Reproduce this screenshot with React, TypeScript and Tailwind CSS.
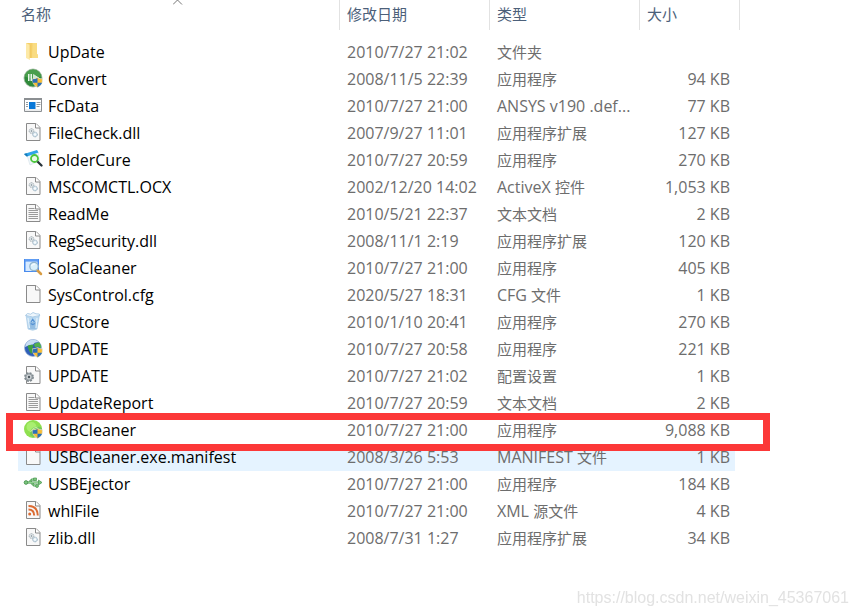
import type { ReactNode } from "react";

type IconName =
  | "folder"
  | "convert"
  | "window"
  | "dll"
  | "folderCure"
  | "text"
  | "sola"
  | "blank"
  | "bin"
  | "globe"
  | "config"
  | "usbCleaner"
  | "usb"
  | "feed";

interface FileRow {
  name: string;
  date: string;
  type: string;
  size: string;
  icon: IconName;
  hovered?: boolean;
  marked?: boolean;
}

const files: FileRow[] = [
  { name: "UpDate", date: "2010/7/27 21:02", type: "文件夹", size: "", icon: "folder" },
  { name: "Convert", date: "2008/11/5 22:39", type: "应用程序", size: "94 KB", icon: "convert" },
  { name: "FcData", date: "2010/7/27 21:00", type: "ANSYS v190 .def...", size: "77 KB", icon: "window" },
  { name: "FileCheck.dll", date: "2007/9/27 11:01", type: "应用程序扩展", size: "127 KB", icon: "dll" },
  { name: "FolderCure", date: "2010/7/27 20:59", type: "应用程序", size: "270 KB", icon: "folderCure" },
  { name: "MSCOMCTL.OCX", date: "2002/12/20 14:02", type: "ActiveX 控件", size: "1,053 KB", icon: "dll" },
  { name: "ReadMe", date: "2010/5/21 22:37", type: "文本文档", size: "2 KB", icon: "text" },
  { name: "RegSecurity.dll", date: "2008/11/1 2:19", type: "应用程序扩展", size: "120 KB", icon: "dll" },
  { name: "SolaCleaner", date: "2010/7/27 21:00", type: "应用程序", size: "405 KB", icon: "sola" },
  { name: "SysControl.cfg", date: "2020/5/27 18:31", type: "CFG 文件", size: "1 KB", icon: "blank" },
  { name: "UCStore", date: "2010/1/10 20:41", type: "应用程序", size: "270 KB", icon: "bin" },
  { name: "UPDATE", date: "2010/7/27 20:58", type: "应用程序", size: "221 KB", icon: "globe" },
  { name: "UPDATE", date: "2010/7/27 21:02", type: "配置设置", size: "1 KB", icon: "config" },
  { name: "UpdateReport", date: "2010/7/27 20:59", type: "文本文档", size: "2 KB", icon: "text" },
  { name: "USBCleaner", date: "2010/7/27 21:00", type: "应用程序", size: "9,088 KB", icon: "usbCleaner", marked: true },
  { name: "USBCleaner.exe.manifest", date: "2008/3/26 5:53", type: "MANIFEST 文件", size: "1 KB", icon: "blank", hovered: true },
  { name: "USBEjector", date: "2010/7/27 21:00", type: "应用程序", size: "184 KB", icon: "usb" },
  { name: "whlFile", date: "2010/7/27 21:00", type: "XML 源文件", size: "4 KB", icon: "feed" },
  { name: "zlib.dll", date: "2008/7/31 1:27", type: "应用程序扩展", size: "34 KB", icon: "dll" },
];

function Page() {
  return (
    <>
      <path d="M3.500 1.500h9.500l4 4v13h-13.500z" fill="#f8f8f8" stroke="#8a8a8a" />
      <path d="M12.500 1.500v4.500h4.500" fill="#fff" stroke="#8a8a8a" />
    </>
  );
}

function Shield() {
  return (
    <>
      <path d="M14.500 9.500q2 1.500 5 1.300q.3 6-5 8.700q-5.300-2.700-5-8.700q3 .2 5-1.300z" fill="#f7bd35" stroke="#dfe5ea" strokeWidth=".6" />
      <path d="M14.500 10v4.700H9.800q-.3-1.700-.1-3.400q2.700 0 4.800-1.300z" fill="#2c6fb8" />
      <path d="M14.500 14.700h4.700q-1 3-4.700 4.600z" fill="#2c6fb8" />
    </>
  );
}

const icons: Record<IconName, ReactNode> = {
  folder: (
    <>
      <path d="M3 2h11v11l1 1v3H6z" fill="#f5cf69" />
      <path d="M9.500 2H14v11l1 1v3H9z" fill="#f9dc83" />
      <path d="M3 2l4 2v15l-4-2z" fill="#fde9a6" />
      <path d="M7 4v13" stroke="#edc35c" strokeWidth=".7" />
    </>
  ),
  convert: (
    <>
      <circle cx="10" cy="10" r="9" fill="#2f8a3a" stroke="#9ab59c" strokeWidth=".8" />
      <path d="M2 8.500a8 7 0 0 1 16 0q-8 4-16 0z" fill="#5bab59" opacity=".6" />
      <path d="M5 6h1.500v7H5zM7.500 6H9v7H7.500z" fill="#e9f5e9" />
      <path d="M10.500 6.500l6 4-6 3.500z" fill="#cfe8cf" stroke="#eef8ee" strokeWidth=".7" />
      <Shield />
    </>
  ),
  window: (
    <>
      <path d="M1.500 3.500h17v13h-17z" fill="#fff" stroke="#8b8f92" />
      <path d="M1 3h18v2H1z" fill="#8b8f92" />
      <path d="M6 7h6.500v7H6z" fill="#0878d8" />
      <path d="M3 7.500h2M3 9.500h2M3 11.500h2M13.500 7.500h4M13.500 9.500h4M13.500 11.500h3" stroke="#929ba1" />
      <path d="M2 15h16" stroke="#d9dcde" />
    </>
  ),
  dll: (
    <>
      <Page />
      <circle cx="8.500" cy="9" r="2.300" fill="#e6ebee" stroke="#9da8ae" strokeDasharray="1.300 .5" />
      <circle cx="8.500" cy="9" r=".8" fill="#78868f" />
      <circle cx="12" cy="12.500" r="2.300" fill="#e6f1f7" stroke="#8aa6b8" strokeDasharray="1.300 .5" />
      <circle cx="12" cy="12.500" r=".8" fill="#fff" />
    </>
  ),
  folderCure: (
    <>
      <path d="M4 6.500L15 3l1.500 9-9.500 4z" fill="#f0f7fb" stroke="#cddae2" strokeWidth=".5" />
      <path d="M1 5L14 1l1.500 2.500L4 7.500z" fill="#2fa4e8" />
      <path d="M1 5l2.500-.8L5 7l-1.500.6z" fill="#167ab8" />
      <path d="M14.500 12.500l4 4" stroke="#28343a" strokeWidth="2.300" strokeLinecap="round" />
      <circle cx="11.500" cy="9.500" r="3.500" fill="#eafbe6" stroke="#4cc63c" strokeWidth="1.800" />
    </>
  ),
  text: (
    <>
      <Page />
      <path d="M5.500 5.500h6M5.500 7.500h9.500M5.500 9.500h9.500M5.500 11.500h9.500M5.500 13.500h9.500M5.500 15.500h9.500" stroke="#9b9b9b" />
    </>
  ),
  sola: (
    <>
      <path d="M1 2h15v13H1z" fill="#498bed" />
      <path d="M2.500 4.500h12V14h-12z" fill="#d7eaff" />
      <path d="M2 3h13" stroke="#79aef8" />
      <path d="M14 13l4 4" stroke="#d89c43" strokeWidth="2.500" strokeLinecap="round" />
      <circle cx="11" cy="9.500" r="4.200" fill="#d9f0fb" stroke="#93b6cf" strokeWidth="1.300" />
      <path d="M8.500 9q1-2.500 3.500-2" stroke="#fff" fill="none" />
    </>
  ),
  blank: <Page />,
  bin: (
    <>
      <path d="M3 4l2 14q5 2.500 9 0l2.500-14z" fill="#b9d8f0" stroke="#a3c6e3" strokeWidth=".6" />
      <path d="M5 11l1 6.500q4 1.500 7.500 0l1-6.500z" fill="#93bde2" />
      <path d="M2.700 4l2-1.500 3 .7 2.300-1.700 3 1.300 3.300.2.400 1.500q-7 3-14 0z" fill="#eef6fc" stroke="#93bbdc" strokeWidth=".7" />
      <path d="M5 7l1.500 10M14 7l-1 10" stroke="#e0f0fb" strokeWidth="1.300" />
      <path d="M8 11l1.700-2.500L11.500 11M12 12.500l-2.300 1-2-1" fill="none" stroke="#5592d4" strokeWidth="1.300" />
    </>
  ),
  globe: (
    <>
      <circle cx="10" cy="10" r="8.500" fill="#2f5fb8" stroke="#9db4d6" strokeWidth=".7" />
      <path d="M2 9q.5-6 7-7.500 5 0 7 3-4-1-6 2-4 0-8 2.500z" fill="#c9def3" />
      <path d="M4.500 8q3-2 6-1l-1 3 1 1.500-2 4.500q-3-3-4-8z" fill="#3fa142" />
      <path d="M11 6q3-2 5.500-1.500 2 3 1.500 6l-3-2-3 1z" fill="#55b24c" />
      <Shield />
    </>
  ),
  config: (
    <>
      <Page />
      <circle cx="6" cy="12" r="4" fill="#b8bec2" stroke="#7d878d" strokeWidth="1.800" strokeDasharray="2 1.150" />
      <circle cx="6" cy="12" r="3.200" fill="#ccd1d4" stroke="#8d969b" />
      <circle cx="6" cy="12" r="1.200" fill="#4f5a61" />
    </>
  ),
  usbCleaner: (
    <>
      <circle cx="10" cy="10" r="9" fill="#8fe04f" />
      <circle cx="8.500" cy="8" r="5" fill="#a9ee70" />
      <path d="M7 16q-.5-8 7-8.500 4 0 5 2 0 5-3.500 8-4.500 2-8.500-1.500z" fill="#74c95a" />
      <path d="M7.500 13q1.500-4.500 7-5" fill="none" stroke="#c8f5a0" />
      <Shield />
    </>
  ),
  usb: (
    <>
      <path d="M3 9.500h14M6 9.500l3-3h3M8 9.500l3 3h3" fill="none" stroke="#4b9852" strokeWidth="2.200" strokeLinecap="round" />
      <path d="M3 9.500h14M6 9.500l3-3h3M8 9.500l3 3h3" fill="none" stroke="#8fd18f" />
      <circle cx="3" cy="9.500" r="1.800" fill="#7cc57e" stroke="#4b9852" />
      <path d="M15.500 7l3.500 2.500-3.500 2.500z" fill="#7cc57e" stroke="#4b9852" strokeWidth=".7" />
      <path d="M10.500 5h3v2.500h-3z" fill="#7cc57e" stroke="#4b9852" strokeWidth=".7" />
      <circle cx="14" cy="13" r="1.500" fill="#7cc57e" stroke="#4b9852" strokeWidth=".7" />
    </>
  ),
  feed: (
    <>
      <Page />
      <circle cx="6.700" cy="14" r="1.500" fill="#db6b32" />
      <path d="M5.500 9.500q5.500 0 5.700 6M5.500 6q9 0 9.300 9.500" fill="none" stroke="#db6b32" strokeWidth="2" />
    </>
  ),
};

function FileIcon({ name }: { name: IconName }) {
  return (
    <svg viewBox="0 0 20 20" className="mt-0.5 size-5 shrink-0" aria-hidden="true">
      {icons[name]}
    </svg>
  );
}

// Chinese glyphs run a size smaller than the Latin ones next to them
function TypeLabel({ text }: { text: string }) {
  const start = text.search(/[\u4e00-\u9fff]/);
  if (start < 0) return <>{text}</>;
  return (
    <>
      {text.slice(0, start)}
      <span className="text-[15px]">{text.slice(start)}</span>
    </>
  );
}

const headCell = "h-[30px] border-r border-[#e2e2e2] p-0 text-left align-top font-normal";
const headButton = "block w-full text-left leading-7";

export default function App() {
  return (
    <main className="min-h-screen bg-white pr-[117px] pl-[18px] font-['Open_Sans','Noto_Sans_CJK_SC',sans-serif] text-base text-[#6d6d6d]">
      <table className="w-full table-fixed border-separate border-spacing-0">
        <colgroup>
          <col />
          <col className="w-[150px]" />
          <col className="w-[150px]" />
          <col className="w-[95px]" />
          <col className="w-[5px]" />
        </colgroup>
        <thead className="text-[15px] text-[#4c607a]">
          <tr>
            <th className={`relative ${headCell}`} aria-sort="ascending">
              <svg viewBox="0 0 10 5" className="absolute top-0 left-1/2 h-[5px] w-2.5 -translate-x-1/2" aria-hidden="true">
                <path d="M0 4.500L4.500 0L9 4.500" fill="none" stroke="#777" />
              </svg>
              <button type="button" className={`${headButton} pl-[3px]`}>名称</button>
            </th>
            <th className={headCell}>
              <button type="button" className={`${headButton} pl-[7px]`}>修改日期</button>
            </th>
            <th className={headCell}>
              <button type="button" className={`${headButton} pl-[7px]`}>类型</button>
            </th>
            <th className={headCell} colSpan={2}>
              <button type="button" className={`${headButton} pl-[7px]`}>大小</button>
            </th>
          </tr>
        </thead>
        <tbody className="leading-[27px] whitespace-nowrap before:block before:h-[9px]">
          {files.map((file) => {
            const cell = file.hovered ? "h-[27px] bg-[#e5f3ff] p-0" : "h-[27px] p-0";
            return (
              <tr key={file.name + file.icon} className="relative">
                <td className={cell}>
                  <div className="flex h-[27px] gap-[5px] pl-[5px] text-black">
                    <FileIcon name={file.icon} />
                    <span>{file.name}</span>
                  </div>
                  {file.marked && (
                    <div className="pointer-events-none absolute -top-1 -right-[30px] -bottom-[7px] -left-3 z-10 border-[7px] border-[#fc3838]" />
                  )}
                </td>
                <td className={`${cell} pl-[7px]`}>{file.date}</td>
                <td className={`${cell} pl-[7px]`}>
                  <div className="h-[27px]">
                    <TypeLabel text={file.type} />
                  </div>
                </td>
                <td className={`${cell} pr-[5px] text-right`}>{file.size}</td>
                <td className="p-0" />
              </tr>
            );
          })}
        </tbody>
      </table>
      <p className="fixed right-2 bottom-2 font-['Liberation_Sans',sans-serif] text-base leading-5 text-[#e2e2e2]">
        https://blog.csdn.net/weixin_45367061
      </p>
    </main>
  );
}
